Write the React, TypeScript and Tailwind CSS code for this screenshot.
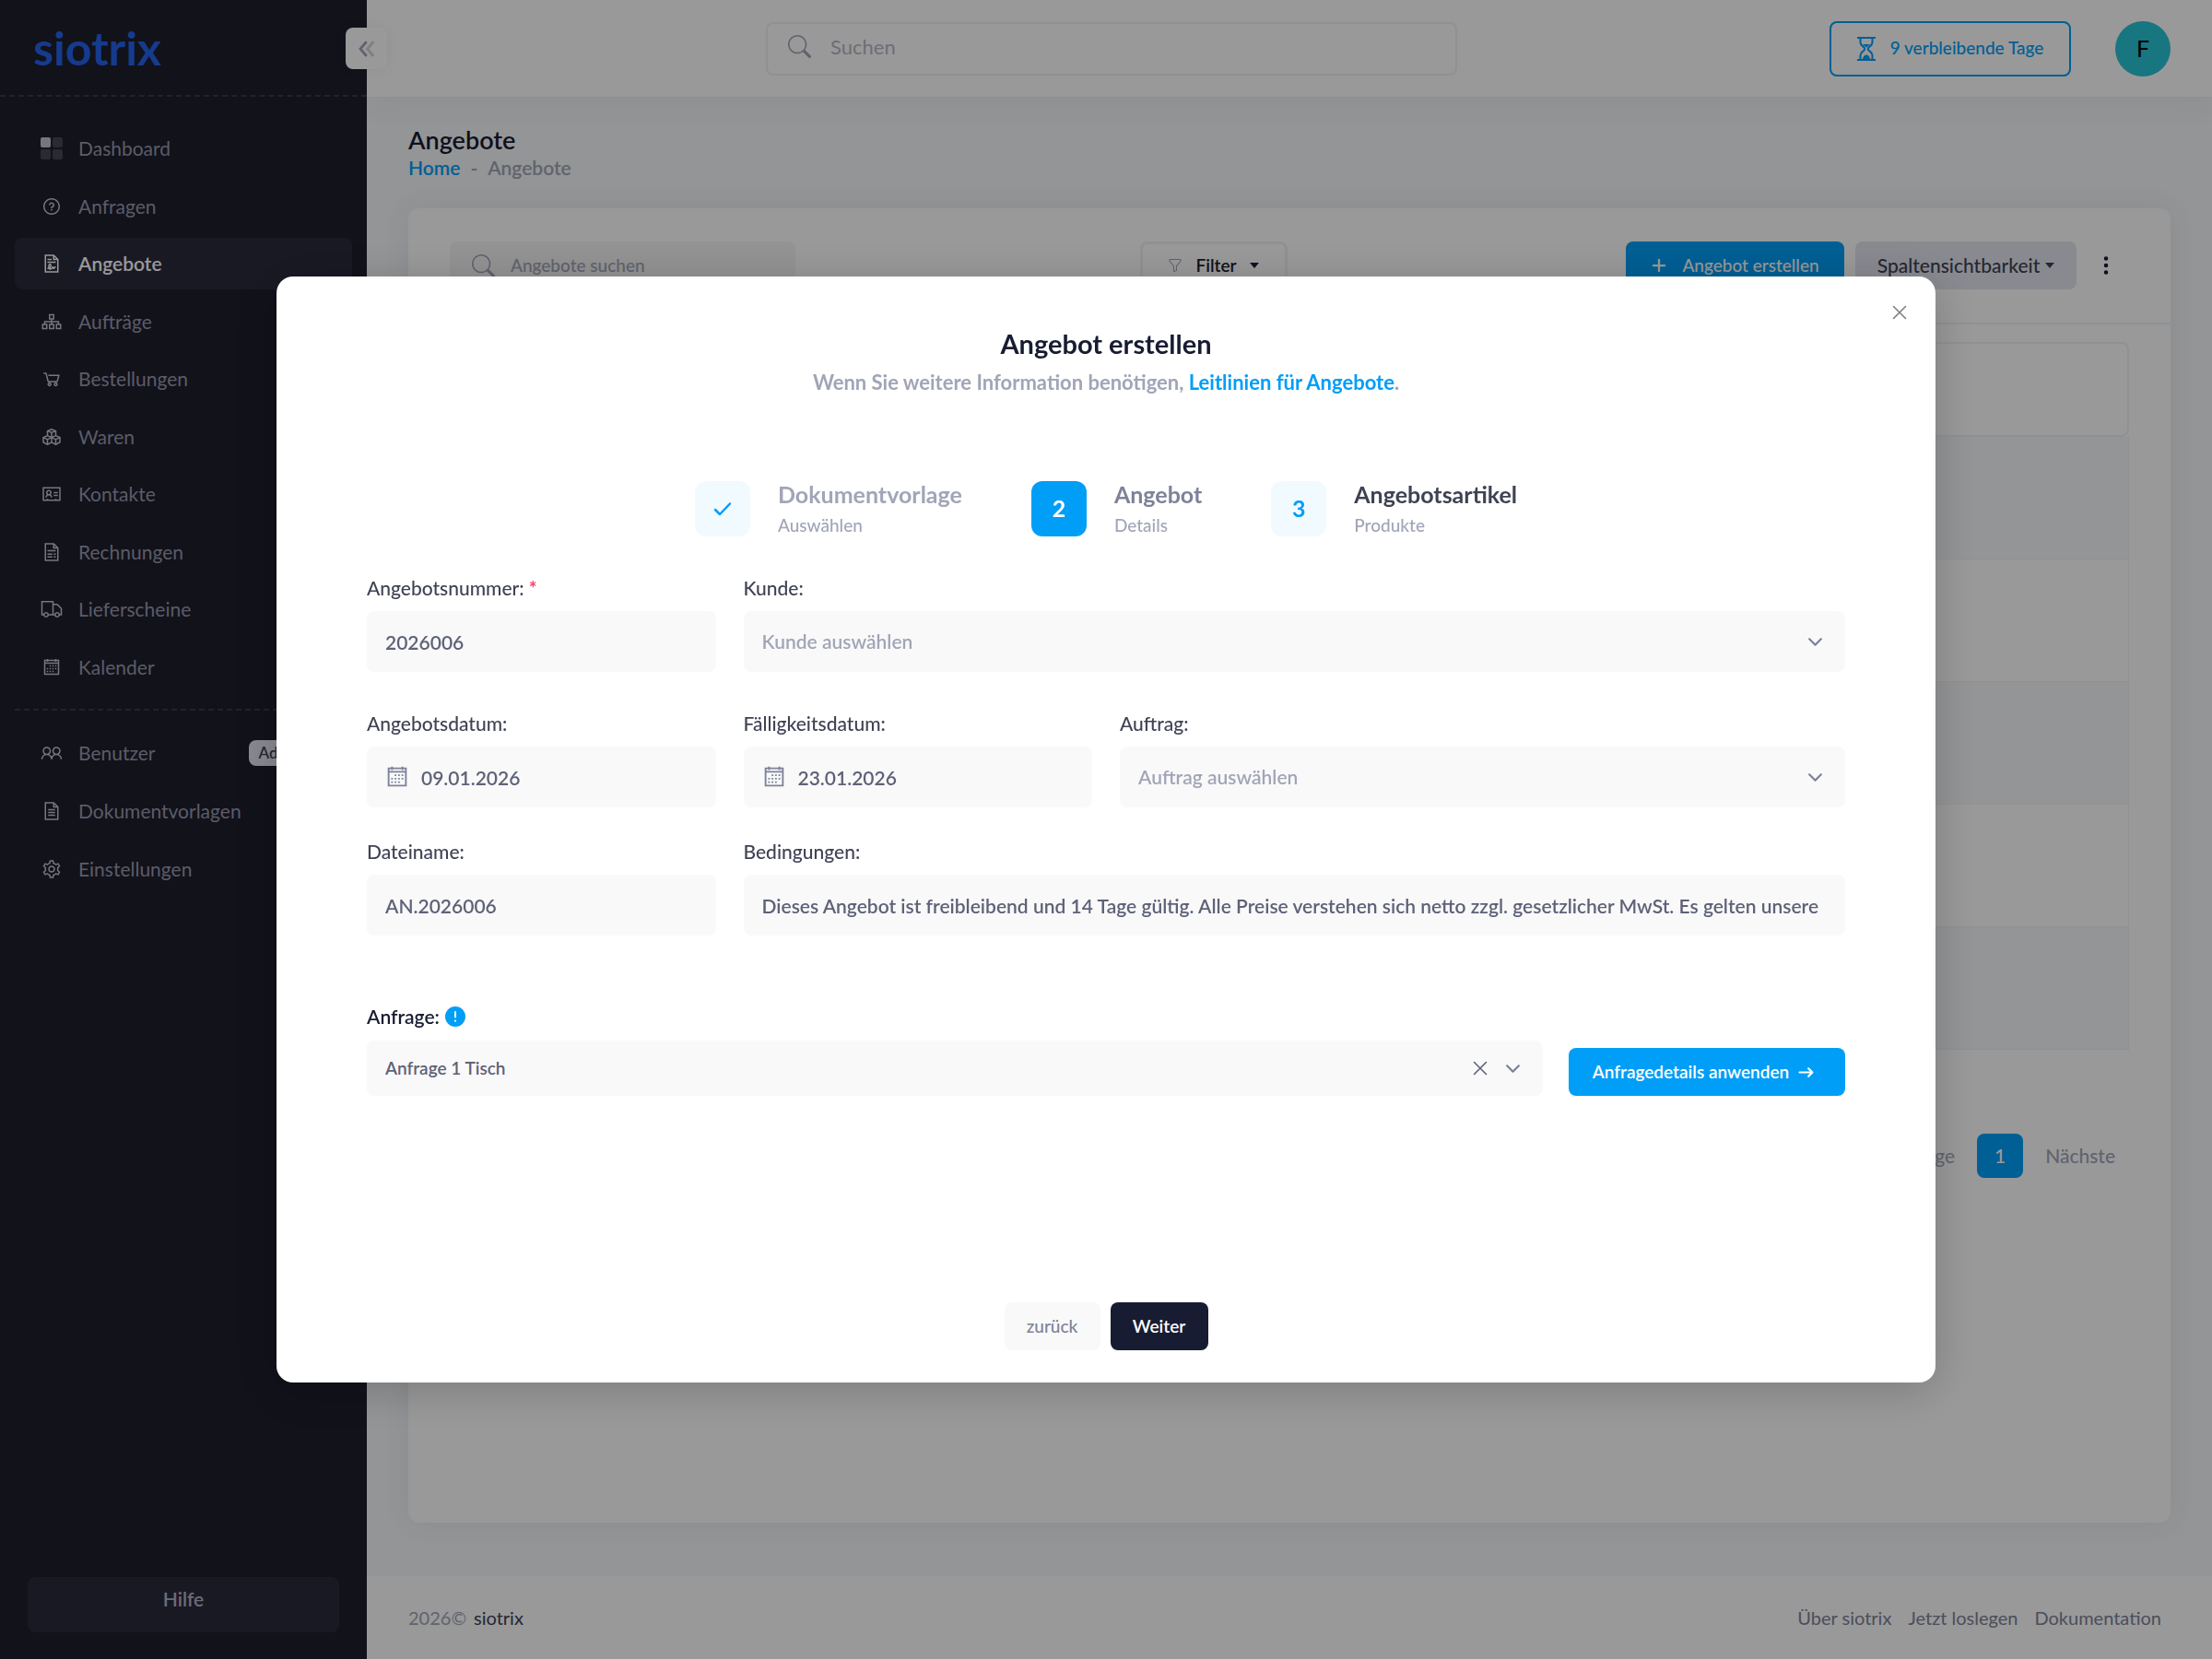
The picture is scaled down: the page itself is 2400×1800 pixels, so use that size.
import type { ReactNode } from "react";
import { BsArrowRight, BsChevronDown, BsFunnel, BsPlusLg, BsSearch, BsThreeDotsVertical } from "react-icons/bs";
import {
  LiaAddressCard,
  LiaCalendar,
  LiaCogSolid,
  LiaCubesSolid,
  LiaFileAlt,
  LiaFileContractSolid,
  LiaFileInvoiceSolid,
  LiaQuestionCircle,
  LiaShoppingCartSolid,
  LiaSitemapSolid,
  LiaTruckSolid,
  LiaUserFriendsSolid,
} from "react-icons/lia";

function DashboardIcon() {
  return (
    <svg viewBox="0 0 24 24" className="size-6" fill="#c5c5d8">
      <rect width="11" height="11" rx="2" />
      <rect x="13" width="11" height="11" rx="2" opacity="0.25" />
      <rect y="13" width="11" height="11" rx="2" opacity="0.25" />
      <rect x="13" y="13" width="11" height="11" rx="2" opacity="0.25" />
    </svg>
  );
}

function HourglassIcon() {
  return (
    <svg viewBox="0 0 20 26" className="h-[26px] w-5" fill="none" stroke="currentColor" strokeWidth="2">
      <path d="M0 1h20M0 25h20" />
      <path d="M3.500 1v5c0 4 4.800 4.500 4.800 7s-4.800 3-4.800 7v5M16.500 1v5c0 4-4.800 4.500-4.800 7s4.800 3 4.800 7v5" />
      <path d="M6 8h8l-4 3.500zM6 24.500c0-3 2-5 4-5s4 2 4 5z" fill="currentColor" stroke="none" />
    </svg>
  );
}

function CrossIcon() {
  return (
    <svg viewBox="0 0 16 16" className="size-4" stroke="currentColor" strokeWidth="1.6" strokeLinecap="round">
      <path d="M1.500 1.500 14.500 14.500M14.500 1.500 1.500 14.500" />
    </svg>
  );
}

function Caret() {
  return <span className="border-x-[5px] border-t-[6px] border-x-transparent border-t-current" />;
}

const mainNav = [
  { label: "Dashboard", icon: <DashboardIcon /> },
  { label: "Anfragen", icon: <LiaQuestionCircle size={24} /> },
  { label: "Angebote", icon: <LiaFileContractSolid size={24} />, active: true },
  { label: "Aufträge", icon: <LiaSitemapSolid size={24} /> },
  { label: "Bestellungen", icon: <LiaShoppingCartSolid size={24} /> },
  { label: "Waren", icon: <LiaCubesSolid size={24} /> },
  { label: "Kontakte", icon: <LiaAddressCard size={24} /> },
  { label: "Rechnungen", icon: <LiaFileInvoiceSolid size={24} /> },
  { label: "Lieferscheine", icon: <LiaTruckSolid size={24} /> },
  { label: "Kalender", icon: <LiaCalendar size={24} /> },
];

const adminNav = [
  { label: "Benutzer", icon: <LiaUserFriendsSolid size={24} />, badge: "Advanced" },
  { label: "Dokumentvorlagen", icon: <LiaFileAlt size={24} /> },
  { label: "Einstellungen", icon: <LiaCogSolid size={24} /> },
];

type NavItemProps = { label: string; icon: ReactNode; active?: boolean; badge?: string };

function NavItem({ label, icon, active, badge }: NavItemProps) {
  return (
    <a
      href="#"
      className={`flex h-14 items-center rounded-lg pl-7 pr-4 text-[21px] leading-7 ${
        active ? "bg-[#2a2a3c] font-semibold text-white" : "text-[#9899ac]"
      }`}
    >
      <span className={`mr-[17px] ${active ? "text-white" : "text-[#c5c5d8]"}`}>{icon}</span>
      {label}
      {badge && (
        <span className="ml-auto rounded-lg bg-[#e4e6ef] px-[11px] text-[17px] leading-7 font-semibold text-[#3f4254]">
          {badge}
        </span>
      )}
    </a>
  );
}

function Sidebar() {
  return (
    <aside className="relative flex w-[398px] shrink-0 flex-col bg-[#1e1e2d]">
      <div className="flex h-[105px] items-center border-b-2 border-dashed border-[#393945] pl-9">
        <a href="#" className="text-[50px] leading-[52px] font-bold text-[#2563eb]">
          siotrix
        </a>
      </div>
      <button
        type="button"
        aria-label="Menü einklappen"
        className="absolute top-[30px] -right-[22px] z-10 flex size-[45px] items-center justify-center rounded-lg bg-white shadow-[0_0_15px_rgba(0,0,0,0.06)]"
      >
        <svg viewBox="0 0 18 18" className="size-[18px]" fill="none" stroke="#a1a5b7" strokeWidth="2.800" strokeLinecap="round">
          <path d="M8 2 2 9l6 7" />
          <path d="M15.500 2 9.500 9l6 7" opacity="0.5" />
        </svg>
      </button>
      <nav className="mt-7 flex h-[619px] flex-col justify-between px-4">
        {mainNav.map((item) => (
          <NavItem key={item.label} {...item} />
        ))}
      </nav>
      <div className="mx-4 mt-[17px] mb-[18px] border-b-2 border-dashed border-[#393945]" />
      <nav className="flex h-[182px] flex-col justify-between px-4">
        {adminNav.map((item) => (
          <NavItem key={item.label} {...item} />
        ))}
      </nav>
      <a
        href="#"
        className="mx-[30px] mt-auto mb-[29px] h-[60px] rounded-lg bg-[#2a2a3c] pt-2 text-center text-[21px] leading-8 font-semibold text-[#b5b5c3]"
      >
        Hilfe
      </a>
    </aside>
  );
}

function Topbar() {
  return (
    <header className="flex h-[105px] items-center bg-white pr-[45px] pl-[433px] shadow-[0_10px_30px_rgba(82,63,105,0.05)]">
      <label className="mr-[404px] flex h-[58px] flex-1 items-center gap-[21px] rounded-lg border-2 border-[#eff2f5] px-[22px] pb-1">
        <BsSearch size={25} className="text-[#a1a5b7]" />
        <input
          type="search"
          aria-label="Suchen"
          placeholder="Suchen"
          className="flex-1 text-[22px] leading-7 outline-none placeholder:text-[#b5b9c4]"
        />
      </label>
      <button
        type="button"
        className="mr-12 flex h-[60px] w-[262px] items-center justify-center gap-4 rounded-lg border-2 border-[#009ef7] text-[19px] font-medium text-[#009ef7]"
      >
        <HourglassIcon />
        9 verbleibende Tage
      </button>
      <button type="button" className="size-[60px] rounded-full bg-[#29c5d6] text-[25px] font-normal text-black">
        F
      </button>
    </header>
  );
}

const rows = [1, 2, 3, 4, 5];

function OffersCard() {
  return (
    <section className="mx-[45px] mt-[30px] mb-[58px] flex flex-1 flex-col rounded-xl bg-white shadow-[0_0_30px_rgba(82,63,105,0.08)]">
      <div className="flex h-[126px] items-start border-b-2 border-[#eff2f5] pt-9 pr-[58px] pl-[45px]">
        <label className="flex h-[52px] w-[375px] items-center gap-[17px] rounded-lg bg-[#f5f5f5] px-6">
          <BsSearch size={25} className="shrink-0 text-[#a1a5b7]" />
          <input
            type="search"
            aria-label="Angebote suchen"
            placeholder="Angebote suchen"
            className="w-full text-[19px] font-medium outline-none placeholder:text-[#a1a5b7]"
          />
        </label>
        <div className="flex flex-1 justify-center pl-[6px]">
          <button
            type="button"
            className="flex h-[52px] w-40 items-center justify-center gap-[14px] rounded-lg border-[3px] border-[#eff2f5] text-[19px] font-semibold text-[#181c32]"
          >
            <BsFunnel size={16} className="text-[#a1a5b7]" />
            Filter
            <Caret />
          </button>
        </div>
        <button
          type="button"
          className="mr-3 flex h-[52px] w-[237px] items-center justify-center gap-4 rounded-lg bg-[#009ef7] text-[19px] font-medium text-white"
        >
          <BsPlusLg size={18} strokeWidth={1} />
          Angebot erstellen
        </button>
        <button
          type="button"
          className="mr-5 flex h-[52px] w-60 items-center justify-center gap-[6px] rounded-lg bg-[#e4e6ef] text-[21px] font-medium text-[#3f4254]"
        >
          Spaltensichtbarkeit
          <Caret />
        </button>
        <button type="button" aria-label="Mehr" className="flex h-[52px] items-center text-[#181c32]">
          <BsThreeDotsVertical size={24} />
        </button>
      </div>
      <div className="px-[45px] pt-[19px]">
        <table className="w-full border-separate border-spacing-0">
          <thead>
            <tr>
              <th aria-label="Angebote" className="h-[103px] rounded-lg border-2 border-[#eff2f5]" />
            </tr>
          </thead>
          <tbody>
            {rows.map((row) => (
              <tr key={row} className="odd:bg-[#f5f8fa]">
                <td className="h-[133px] border-x border-b border-[#eff2f5]" />
              </tr>
            ))}
          </tbody>
        </table>
        <div className="mt-[91px] flex items-center justify-end gap-6 pr-[15px] text-[21px] text-[#a1a5b7]">
          <a href="#">Vorherige</a>
          <a href="#" className="w-[50px] rounded-lg bg-[#009ef7] text-center leading-[48px] font-medium text-white">
            1
          </a>
          <a href="#" className="font-medium">
            Nächste
          </a>
        </div>
      </div>
    </section>
  );
}

type StepProps = { mark: ReactNode; title: string; text: string; boxClass: string; titleClass: string };

function Step({ mark, title, text, boxClass, titleClass }: StepProps) {
  return (
    <li className="flex items-center gap-[30px]">
      <span className={`flex size-[60px] items-center justify-center rounded-xl text-[25px] font-bold ${boxClass}`}>{mark}</span>
      <div>
        <h3 className={`text-[25px] leading-8 font-bold ${titleClass}`}>{title}</h3>
        <p className="mt-1 text-[19px] leading-7 font-medium text-[#a1a5b7]">{text}</p>
      </div>
    </li>
  );
}

type FieldProps = { id: string; label: string; required?: boolean; className?: string; children: ReactNode };

function Field({ id, label, required, className = "", children }: FieldProps) {
  return (
    <div className={className}>
      <label htmlFor={id} className="block text-[21px] leading-7 font-medium text-[#3f4254]">
        {label} {required && <span className="font-bold text-[#f1416c]">*</span>}
      </label>
      <div className="relative mt-[11px]">{children}</div>
    </div>
  );
}

const inputClass =
  "h-[66px] w-full rounded-lg bg-[#f9f9f9] px-5 text-[21px] font-semibold text-[#5e6278] outline-none";
const selectClass =
  "h-[66px] w-full appearance-none rounded-lg bg-[#f9f9f9] px-5 text-[21px] font-semibold text-[#a1a5b7] outline-none";

function SelectArrow() {
  return (
    <BsChevronDown size={17} strokeWidth={1} className="pointer-events-none absolute inset-y-0 right-6 my-auto text-[#7e8299]" />
  );
}

function DateInput({ id, value }: { id: string; value: string }) {
  return (
    <>
      <LiaCalendar size={30} className="absolute inset-y-0 left-[18px] my-auto text-[#7e8299]" />
      <input id={id} type="text" defaultValue={value} className={`${inputClass} pl-[59px]`} />
    </>
  );
}

function OfferModal() {
  return (
    <div className="fixed inset-0 z-20 flex items-center justify-center bg-black/40">
      <div
        role="dialog"
        aria-modal="true"
        aria-labelledby="modal-title"
        className="relative flex w-3/4 flex-col rounded-[18px] bg-white px-[98px] pt-[55px] pb-[35px] shadow-[0_8px_50px_rgba(0,0,0,0.2)]"
      >
        <button type="button" aria-label="Schließen" className="absolute top-[31px] right-[31px] text-[#7f7f7f]">
          <CrossIcon />
        </button>

        <div className="text-center">
          <h1 id="modal-title" className="text-[29px] leading-9 font-bold text-[#181c32]">
            Angebot erstellen
          </h1>
          <p className="mt-2 text-[22px] leading-8 font-bold text-[#a1a5b7]">
            Wenn Sie weitere Information benötigen,{" "}
            <a href="#" className="text-[#009ef7]">
              Leitlinien für Angebote
            </a>
            .
          </p>
        </div>

        <ol className="mt-[89px] flex justify-center gap-[75px]">
          <Step
            mark={
              <svg viewBox="0 0 20 16" className="h-4 w-5" fill="none" stroke="currentColor" strokeWidth="2.500" strokeLinecap="round" strokeLinejoin="round">
                <path d="m2 9 5 5L18 2.500" />
              </svg>
            }
            title="Dokumentvorlage"
            text="Auswählen"
            boxClass="bg-[#f1faff] text-[#009ef7]"
            titleClass="text-[#a1a5b7]"
          />
          <Step mark="2" title="Angebot" text="Details" boxClass="bg-[#009ef7] text-white" titleClass="text-[#7e8299]" />
          <Step mark="3" title="Angebotsartikel" text="Produkte" boxClass="bg-[#f1faff] text-[#009ef7]" titleClass="text-[#3f4254]" />
        </ol>

        <form>
          <div className="mt-10 grid grid-cols-4 gap-x-[30px]">
            <Field id="number" label="Angebotsnummer:" required>
              <input id="number" type="text" defaultValue="2026006" className={inputClass} />
            </Field>
            <Field id="customer" label="Kunde:" className="col-span-3">
              <select id="customer" className={selectClass}>
                <option>Kunde auswählen</option>
              </select>
              <SelectArrow />
            </Field>
          </div>
          <div className="mt-[42px] grid grid-cols-4 gap-x-[30px]">
            <Field id="date" label="Angebotsdatum:">
              <DateInput id="date" value="09.01.2026" />
            </Field>
            <Field id="due" label="Fälligkeitsdatum:">
              <DateInput id="due" value="23.01.2026" />
            </Field>
            <Field id="order" label="Auftrag:" className="col-span-2">
              <select id="order" className={selectClass}>
                <option>Auftrag auswählen</option>
              </select>
              <SelectArrow />
            </Field>
          </div>
          <div className="mt-[34px] grid grid-cols-4 gap-x-[30px]">
            <Field id="filename" label="Dateiname:">
              <input id="filename" type="text" defaultValue="AN.2026006" className={inputClass} />
            </Field>
            <Field id="terms" label="Bedingungen:" className="col-span-3">
              <input
                id="terms"
                type="text"
                defaultValue="Dieses Angebot ist freibleibend und 14 Tage gültig. Alle Preise verstehen sich netto zzgl. gesetzlicher MwSt. Es gelten unsere"
                className={inputClass}
              />
            </Field>
          </div>

          <div className="mt-[74px] flex items-end gap-7">
            <div className="flex-1">
              <div className="flex items-center gap-[6px]">
                <label htmlFor="request" className="text-[21px] leading-7 font-semibold text-[#181c32]">
                  Anfrage:
                </label>
                <svg viewBox="0 0 22 22" className="size-[22px]">
                  <circle cx="11" cy="11" r="11" fill="#009ef7" />
                  <path d="M11 6v5.500M11 15.500v.2" stroke="white" strokeWidth="2" strokeLinecap="round" />
                </svg>
              </div>
              <div className="relative mt-3">
                <select
                  id="request"
                  className="h-[60px] w-full appearance-none rounded-lg bg-[#f9f9f9] px-5 text-[19px] font-semibold text-[#5e6278] outline-none"
                >
                  <option>Anfrage 1 Tisch</option>
                </select>
                <button type="button" aria-label="Auswahl entfernen" className="absolute inset-y-0 right-[60px] text-[#5e6278]">
                  <CrossIcon />
                </button>
                <SelectArrow />
              </div>
            </div>
            <button
              type="button"
              className="flex h-[52px] w-[300px] items-center justify-center gap-[10px] rounded-lg bg-[#009ef7] pr-2 text-[19px] font-semibold text-white"
            >
              Anfragedetails anwenden
              <BsArrowRight size={17} strokeWidth={1} />
            </button>
          </div>

          <div className="mt-[224px] flex justify-center gap-[11px]">
            <button type="button" className="h-[52px] w-[104px] rounded-lg bg-[#f9f9f9] text-[19px] font-medium text-[#7e8299]">
              zurück
            </button>
            <button type="button" className="h-[52px] w-[106px] rounded-lg bg-[#181c32] text-[19px] font-semibold text-white">
              Weiter
            </button>
          </div>
        </form>
      </div>
    </div>
  );
}

export default function App() {
  return (
    <div className="flex min-h-screen bg-[#f5f8fa] font-[Lato,sans-serif]">
      <Sidebar />
      <div className="flex min-w-0 flex-1 flex-col">
        <Topbar />
        <div className="mt-[31px] ml-[45px]">
          <h2 className="text-[27px] leading-8 font-semibold text-[#181c32]">Angebote</h2>
          <p className="flex gap-[11px] text-[21px] leading-7 font-semibold text-[#a1a5b7]">
            <a href="#" className="text-[#009ef7]">
              Home
            </a>
            <span>-</span>
            <span>Angebote</span>
          </p>
        </div>
        <OffersCard />
        <footer className="flex h-[90px] items-center justify-between bg-white pr-[55px] pl-[45px] text-[20px] leading-7 text-[#7e8299]">
          <p className="flex gap-2">
            <span className="text-[#a1a5b7]">2026©</span>
            <a href="#" className="text-[#3f4254]">
              siotrix
            </a>
          </p>
          <div className="flex gap-[18px]">
            <a href="#">Über siotrix</a>
            <a href="#">Jetzt loslegen</a>
            <a href="#">Dokumentation</a>
          </div>
        </footer>
      </div>
      <OfferModal />
    </div>
  );
}
